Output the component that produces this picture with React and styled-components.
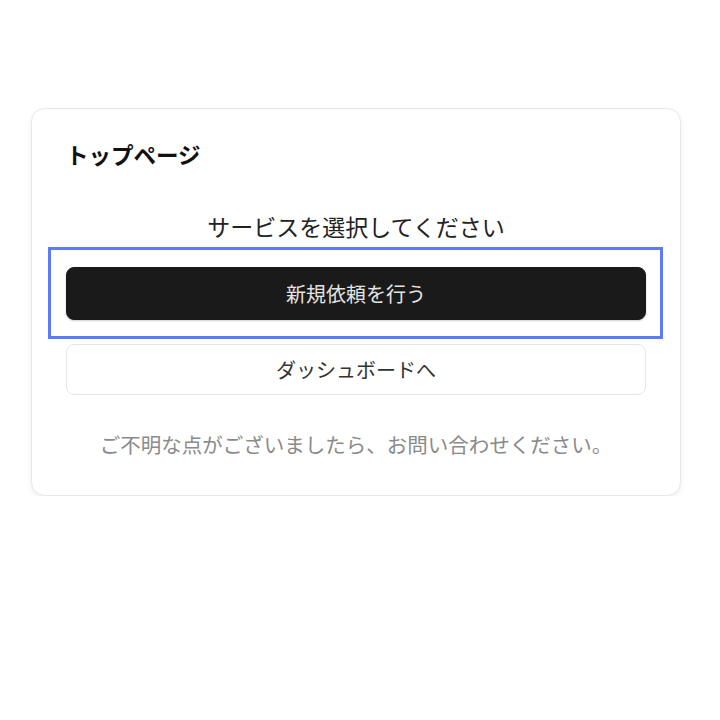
import styled, { createGlobalStyle } from "styled-components";

const GlobalStyle = createGlobalStyle`
  body {
    margin: 0;
    background: #ffffff;
    font-family: "Noto Sans CJK JP", "Noto Sans", sans-serif;
  }
`;

const Page = styled.div`
  padding: 108px 0 0 31px;
  width: 650px;
`;

const Card = styled.section`
  display: flex;
  flex-direction: column;
  border: 1px solid #e8e8e8;
  border-radius: 14px;
  box-shadow: 0 2px 5px rgba(0, 0, 0, 0.08);
  padding: 31px 34px 39px 34px;
  background: #fff;
`;

const Title = styled.h1`
  margin: 0;
  font-size: 22.5px;
  line-height: 28px;
  font-weight: 700;
  color: #111;
`;

const Lead = styled.p`
  margin: 43px 0 0;
  font-size: 23px;
  line-height: 30px;
  text-align: center;
  color: #222;
`;

const FocusRing = styled.div`
  margin: 6px -17px 0 -18px;
  padding: 17px 14px 16px 15px;
  border: 3px solid #5b7bfb;
`;

const Button = styled.button`
  display: flex;
  align-items: center;
  justify-content: center;
  width: 100%;
  height: ${(p) => (p.$primary ? "53px" : "51px")};
  margin-top: ${(p) => (p.$primary ? "0" : "5px")};
  border-radius: 8px;
  border: 1px solid ${(p) => (p.$primary ? "#1a1a1a" : "#e6e6e6")};
  background: ${(p) => (p.$primary ? "#1a1a1a" : "#fff")};
  color: ${(p) => (p.$primary ? "#e4e4e4" : "#333")};
  font-family: inherit;
  font-size: 20px;
  cursor: pointer;
  box-shadow: ${(p) => (p.$primary ? "0 1px 2px rgba(0,0,0,0.2)" : "none")};
`;

const Note = styled.p`
  margin: 37px 0 0;
  font-size: 20.5px;
  line-height: 24px;
  text-align: center;
  color: #8a8a8a;
`;

export default function App() {
  return (
    <Page>
      <GlobalStyle />
      <Card>
        <Title>トップページ</Title>
        <Lead>サービスを選択してください</Lead>
        <FocusRing>
          <Button $primary>新規依頼を行う</Button>
        </FocusRing>
        <Button>ダッシュボードへ</Button>
        <Note>ご不明な点がございましたら、お問い合わせください。</Note>
      </Card>
    </Page>
  );
}
